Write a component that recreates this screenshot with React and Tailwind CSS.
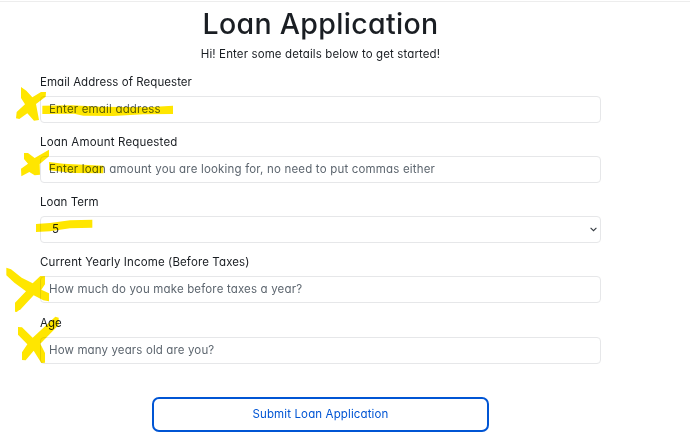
import React from 'react';

const fields = [
  { label: 'Email Address of Requester', text: 'Enter email address', labelTrack: 'tracking-[0.05px]', textTrack: 'tracking-[0.18px]', height: 'h-[60px]' },
  { label: 'Loan Amount Requested', text: 'Enter loan amount you are looking for, no need to put commas either', labelTrack: 'tracking-[0.17px]', textTrack: 'tracking-[0.18px]', height: 'h-[60px]' },
  { label: 'Loan Term', text: '5', select: true, labelTrack: 'tracking-[0.04px]', textTrack: 'tracking-[0px]', height: 'h-[60px]' },
  { label: 'Current Yearly Income (Before Taxes)', text: 'How much do you make before taxes a year?', labelTrack: 'tracking-[0.12px]', textTrack: 'tracking-[0.16px]', height: 'h-[61px]' },
  { label: 'Age', text: 'How many years old are you?', labelTrack: 'tracking-[0px]', textTrack: 'tracking-[0.13px]', height: 'h-[60px]' },
];

function Field({ label, text, select, labelTrack, textTrack, height }) {
  return (
    <div className={height}>
      <div className="flex h-[22px] items-start leading-[16px]">
        <span className={labelTrack}>{label}</span>
      </div>
      <div className={`flex h-[27px] items-center justify-between rounded-[4px] border border-[#e6e7e9] pr-[3px] ${select ? 'pl-[11px] text-[#212529]' : 'pl-[8px] text-[#5d666f]'}`}>
        <span className={textTrack}>{text}</span>
        {select && (
          <svg width="7" height="5" viewBox="0 0 7 5" fill="none" stroke="#343a40" strokeWidth="1.1">
            <path d="M0.6 0.9 3.5 3.7 6.4 0.9" />
          </svg>
        )}
      </div>
    </div>
  );
}

function Highlights() {
  return (
    <svg className="pointer-events-none absolute left-0 top-0 mix-blend-multiply" width="690" height="434" viewBox="0 0 2070 1302" fill="#ffe600">
      <g transform="translate(0 210)">
        <path d="M63 51 79 62 97 82 123 66 138 66 137 80 108 102 117 150 102 152 82 130 58 147 48 145 50 126 75 103 63 84Z" />
        <path d="M127 107 215 106 300 110 440 112 519 107 519 132 430 133 340 138 250 137 222 131 127 132Z" />
      </g>
      <g transform="translate(0 390)">
        <path d="M72 69 84 69 104 84 147 59 147 79 119 102 120 134 104 136 88 126 64 139 63 116 84 101 72 87Z" />
        <path d="M147 96 190 101 310 107 310 130 220 129 147 121Z" />
      </g>
      <g transform="translate(0 570)">
        <path d="M108 102 150 99 210 91 277 89 277 113 210 115 150 124 108 126Z" />
      </g>
      <g transform="translate(0 750)">
        <path d="M19 53 33 58 65 83 98 100 121 78 135 79 135 103 124 119 147 130 147 154 130 151 101 136 60 180 45 180 45 158 78 124 43 98 19 76Z" />
      </g>
      <g transform="translate(0 930)">
        <path d="M45 0 58 0 50 6 45 5ZM54 51 66 52 98 83 166 20 176 23 176 45 121 101 135 129 135 158 124 159 101 122 77 151 66 150 66 127 82 103 54 74Z" />
      </g>
    </svg>
  );
}

export default function App() {
  return (
    <main className="relative h-[434px] w-[690px] overflow-hidden bg-white font-['Inter',sans-serif] text-[11.5px] text-[#1a1e23] [font-feature-settings:'cv11']">
      <div className="h-[2px] border-b border-[#ededed]" />
      <div className="ml-[40px] w-[561px]">
        <h1 className="h-[43px] text-center text-[28.5px] font-medium leading-[43px] tracking-[0.33px]">Loan Application</h1>
        <p className="h-[29px] text-center leading-[18px] tracking-[0.12px]">Hi! Enter some details below to get started!</p>
        <form>
          {fields.map((field) => <Field key={field.label} {...field} />)}
          <button type="button" className="ml-[112px] mt-[22px] flex h-[35px] w-[337px] items-center justify-center rounded-[7px] border-2 border-[#0055d4] tracking-[0.13px] text-[#0055d4]">
            Submit Loan Application
          </button>
        </form>
      </div>
      <Highlights />
    </main>
  );
}
